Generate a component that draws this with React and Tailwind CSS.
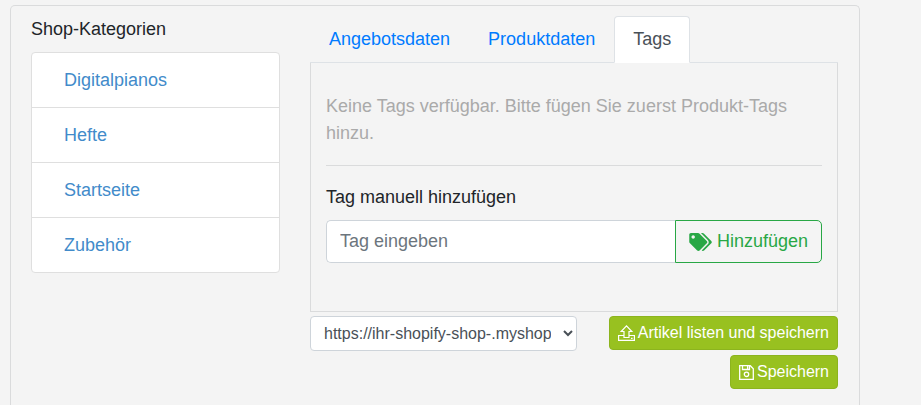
import { useState } from 'react';

const kategorien = ['Digitalpianos', 'Hefte', 'Startseite', 'Zubehör'];
const tabs = ['Angebotsdaten', 'Produktdaten', 'Tags'];
const shops = ['https://ihr-shopify-shop-.myshopify.com'];

function TagsIcon() {
  return (
    <svg className="h-[18px] w-[23px] shrink-0" viewBox="0 0 640 512" fill="currentColor" aria-hidden="true">
      <path d="M497.941 225.941L286.059 14.059A48 48 0 0 0 252.118 0H48C21.49 0 0 21.49 0 48v204.118a48 48 0 0 0 14.059 33.941l211.882 211.882c18.744 18.745 49.136 18.746 67.882 0l204.118-204.118c18.745-18.745 18.745-49.137 0-67.882zM112 160c-26.51 0-48-21.49-48-48s21.49-48 48-48 48 21.49 48 48-21.49 48-48 48zm513.941 133.823L421.823 497.941c-18.745 18.745-49.137 18.745-67.882 0l-.36-.36L527.64 323.522c16.999-16.999 26.36-39.6 26.36-63.64s-9.362-46.641-26.36-63.64L331.397 0h48.721a48 48 0 0 1 33.941 14.059l211.882 211.882c18.745 18.745 18.745 49.137 0 67.882z" />
    </svg>
  );
}

function UploadIcon() {
  return (
    <svg className="h-4 w-[17px] shrink-0" viewBox="0 0 17 16" fill="none" stroke="currentColor" strokeWidth="1.2" aria-hidden="true">
      <path d="M6 12.5V6.5H3.2L8.5 .9L13.8 6.5H11V12.5Z" />
      <path d="M6 10.5H.6V15.4H16.4V10.5H11M13 13.4H14.6" />
    </svg>
  );
}

function SaveIcon() {
  return (
    <svg className="h-[15px] w-[15px] shrink-0" viewBox="0 0 15 15" fill="none" stroke="currentColor" strokeWidth="1.3" aria-hidden="true">
      <path d="M.7 .7H11.3L14.3 3.7V14.3H.7Z" />
      <path d="M3.5 .7V4.5H10.5V.7M8.6 1V4" />
      <circle cx="7.5" cy="9.3" r="2.2" />
    </svg>
  );
}

function App() {
  const [activeTab, setActiveTab] = useState('Tags');
  const [tag, setTag] = useState('');
  const [shop, setShop] = useState(shops[0]);

  const handleSubmit = (e) => {
    e.preventDefault();
    setTag('');
  };

  return (
    <div className="flex h-screen flex-col overflow-hidden bg-[#f4f4f4] pt-[5px] pr-[61px] pl-[10px] font-['Liberation_Sans',Arial,sans-serif] text-[18px] leading-[27px] text-[#212529]">
      <div className="grid flex-1 grid-cols-[249fr_528fr] items-start gap-[30px] rounded-t-[5px] border border-b-0 border-[#dadbdc] pr-[21px] pl-[20px]">
        <div className="pt-[10px]">
          <h2 className="mb-[9px]">Shop-Kategorien</h2>
          <ul className="divide-y divide-[#dfdfdf] rounded-[4px] border border-[#dfdfdf] bg-white">
            {kategorien.map(k => (
              <li key={k}>
                <a href="#" className="block pt-[14px] pr-4 pb-[13px] pl-8 text-[#428bca]">{k}</a>
              </li>
            ))}
          </ul>
        </div>

        <div className="min-w-0 pt-[10px]">
          <div role="tablist" className="flex border-b border-[#dee2e6]">
            {tabs.map(t => (
              <button
                key={t}
                type="button"
                role="tab"
                aria-selected={activeTab === t}
                onClick={() => setActiveTab(t)}
                className={`-mb-px rounded-t-[4px] border px-[18px] py-[9px] ${activeTab === t ? 'border-[#dee2e6] border-b-white bg-white text-[#495057]' : 'border-transparent text-[#007bff]'}`}
              >
                {t}
              </button>
            ))}
          </div>

          <div className="border border-t-0 border-[#dadbdc] px-[15px] pt-[30px] pb-12">
            <p className="mb-[18px] text-[#aaa]">Keine Tags verfügbar. Bitte fügen Sie zuerst Produkt-Tags hinzu.</p>
            <hr className="mb-[18px] border-[#dadbdc]" />
            <form onSubmit={handleSubmit}>
              <label htmlFor="tag" className="mb-[9px] block">Tag manuell hinzufügen</label>
              <div className="flex">
                <input
                  id="tag"
                  type="text"
                  value={tag}
                  onChange={e => setTag(e.target.value)}
                  placeholder="Tag eingeben"
                  className="min-w-0 flex-1 rounded-l-[5px] border border-r-0 border-[#ced4da] bg-white px-[13px] py-[7px] placeholder:text-[#6c757d]"
                />
                <button type="submit" className="flex items-center gap-[5px] rounded-r-[5px] border border-[#28a745] px-[13px] py-[7px] text-[#28a745]">
                  <TagsIcon />
                  Hinzufügen
                </button>
              </div>
            </form>
          </div>

          {/* Shop-Auswahl und Aktionen */}
          <div className="mt-1 flex items-start justify-between text-[16px] leading-6">
            <select
              aria-label="Shop"
              value={shop}
              onChange={e => setShop(e.target.value)}
              className="h-[35px] w-[267px] rounded-[4px] border border-[#ced4da] bg-white px-[9px] text-[#495057]"
            >
              {shops.map(s => (
                <option key={s} value={s}>{s}</option>
              ))}
            </select>
            <div className="flex flex-col items-end gap-[5px] text-white">
              <button type="button" className="flex items-center gap-[3px] rounded-[4px] border border-[#8cb41e] bg-[#98c120] px-2 py-1">
                <UploadIcon />
                Artikel listen und speichern
              </button>
              <button type="button" className="flex items-center gap-[3px] rounded-[4px] border border-[#8cb41e] bg-[#98c120] px-2 py-1">
                <SaveIcon />
                Speichern
              </button>
            </div>
          </div>
        </div>
      </div>
    </div>
  );
}

export default App;
